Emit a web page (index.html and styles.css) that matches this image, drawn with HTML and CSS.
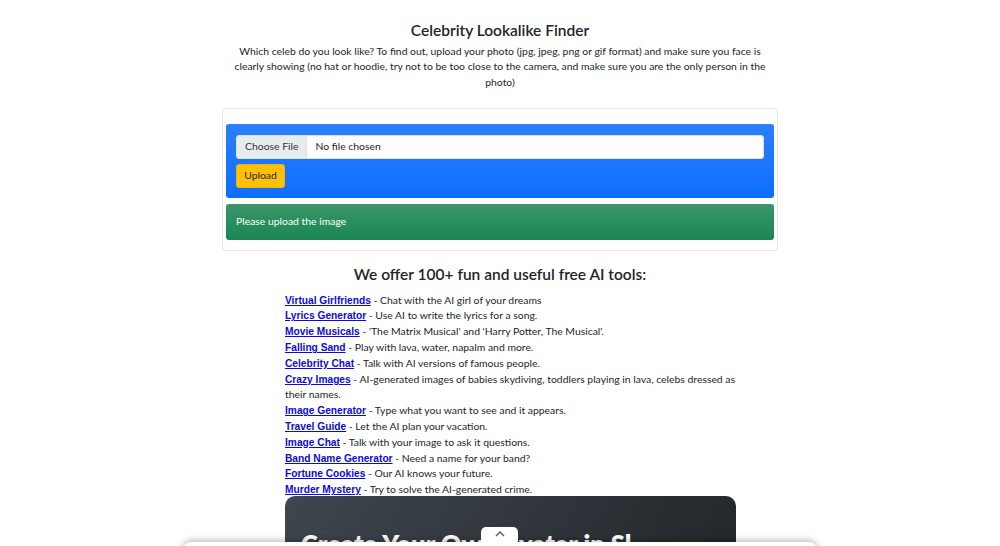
FILE: index.html
```html
<!DOCTYPE html>
<html lang="en">
<head>
<meta charset="utf-8"/>
<meta content="width=device-width, initial-scale=1.0" name="viewport"/>
<title>Celebrity Lookalike Finder</title>
<link rel="stylesheet" href="styles.css">
</head>
<body>
<div class="container">
  <h1 class="title">Celebrity Lookalike Finder</h1>
  <p class="intro">Which celeb do you look like? To find out, upload your photo (jpg, jpeg, png or gif format) and make sure you face is clearly showing (no hat or hoodie, try not to be too close to the camera, and make sure you are the only person in the photo)</p>

  <div class="card">
    <form class="upload-box">
      <div class="file-input">
        <span class="file-btn">Choose File</span>
        <span class="file-name">No file chosen</span>
      </div>
      <button type="button" class="btn-upload">Upload</button>
    </form>
    <div class="status">Please upload the image</div>
  </div>

  <h2 class="tools-title">We offer 100+ fun and useful free AI tools:</h2>
  <ul class="tools">
    <li><a href="#">Virtual Girlfriends</a> - Chat with the AI girl of your dreams</li>
    <li><a href="#">Lyrics Generator</a> - Use AI to write the lyrics for a song.</li>
    <li><a href="#">Movie Musicals</a> - 'The Matrix Musical' and 'Harry Potter, The Musical'.</li>
    <li><a href="#">Falling Sand</a> - Play with lava, water, napalm and more.</li>
    <li><a href="#">Celebrity Chat</a> - Talk with AI versions of famous people.</li>
    <li><a href="#">Crazy Images</a> - AI-generated images of babies skydiving, toddlers playing in lava, celebs dressed as their names.</li>
    <li><a href="#">Image Generator</a> - Type what you want to see and it appears.</li>
    <li><a href="#">Travel Guide</a> - Let the AI plan your vacation.</li>
    <li><a href="#">Image Chat</a> - Talk with your image to ask it questions.</li>
    <li><a href="#">Band Name Generator</a> - Need a name for your band?</li>
    <li><a href="#">Fortune Cookies</a> - Our AI knows your future.</li>
    <li><a href="#">Murder Mystery</a> - Try to solve the AI-generated crime.</li>
  </ul>

  <div class="promo">
    <h3>Create Your Own Avatar in Sl</h3>
  </div>
</div>

<div class="sheet-tab">
  <svg width="12" height="8" viewBox="0 0 12 8"><path d="M2 6 L6 2 L10 6" fill="none" stroke="#555" stroke-width="1.3"/></svg>
</div>
<div class="sheet"></div>
</body>
</html>
```

FILE: styles.css
```css
body {
  margin: 0;
  background: #fff;
  color: #212529;
  font-family: Lato, "Noto Sans", sans-serif;
  font-size: 10.4px;
  line-height: 1.5;
  overflow: hidden;
}

.container { width: 556px; margin: 0 auto; }

.title {
  font-size: 15.5px;
  font-weight: 600;
  text-align: center;
  margin: 21px 0 4px;
  line-height: 1.2;
}
.intro {
  text-align: center;
  margin: 0 0 18px;
  padding: 0 10px;
  line-height: 15.5px;
}

.card {
  border: 1px solid #e6e6e6;
  border-radius: 4px;
  padding: 15px 3px 10px;
}
.upload-box {
  background: linear-gradient(180deg, #2b80fd, #0d6efd);
  border-radius: 3px;
  padding: 11px 10px 10px;
  margin: 0;
}
.file-input {
  display: flex;
  height: 22px;
  background: #fff;
  border: 1px solid #dee2e6;
  border-radius: 3px;
  overflow: hidden;
  align-items: stretch;
}
.file-btn {
  background: #e9ecef;
  border-right: 1px solid #dee2e6;
  padding: 0 8px;
  display: flex;
  align-items: center;
  color: #333;
}
.file-name { display: flex; align-items: center; padding: 0 8px; color: #222; }
.btn-upload {
  margin-top: 5px;
  height: 24px;
  width: 49px;
  background: #ffc107;
  border: 1px solid #f0b400;
  border-radius: 3px;
  font: inherit;
  color: #212529;
  padding: 0;
}
.status {
  margin-top: 6px;
  height: 36px;
  padding: 0 10px;
  display: flex;
  align-items: center;
  border-radius: 3px;
  color: #fff;
  background: linear-gradient(180deg, #3b9569, #198754);
}

.tools-title {
  font-size: 15.5px;
  font-weight: 600;
  text-align: center;
  margin: 14px 0 9px;
  line-height: 1.2;
}
.tools {
  list-style: none;
  margin: 0 0 0 63px;
  padding: 0;
  width: 452px;
  line-height: 15.8px;
}
.tools a {
  font-family: "Liberation Sans", Arial, sans-serif;
  font-size: 10.2px;
  font-weight: bold;
  line-height: 1;
  color: #0a0adf;
}

.promo {
  margin: -2px 0 0 63px;
  width: 451px;
  height: 120px;
  border-radius: 10px;
  background: linear-gradient(120deg, #3f464e, #212529);
  padding: 33px 16px;
  box-sizing: border-box;
}
.promo h3 {
  margin: 0;
  color: #fff;
  font-size: 25.5px;
  font-weight: 800;
  line-height: 1.2;
  white-space: nowrap;
}

.sheet {
  position: fixed;
  left: 183px;
  width: 634px;
  bottom: -40px;
  height: 44px;
  background: #fff;
  border-radius: 8px 8px 0 0;
  box-shadow: 0 -2px 6px rgba(0,0,0,0.25);
}
.sheet-tab {
  position: fixed;
  left: 481px;
  width: 37px;
  bottom: 0;
  height: 19px;
  background: #fff;
  border-radius: 5px 5px 0 0;
  display: flex;
  justify-content: center;
  padding-top: 3px;
  box-sizing: border-box;
  z-index: 2;
}
```
